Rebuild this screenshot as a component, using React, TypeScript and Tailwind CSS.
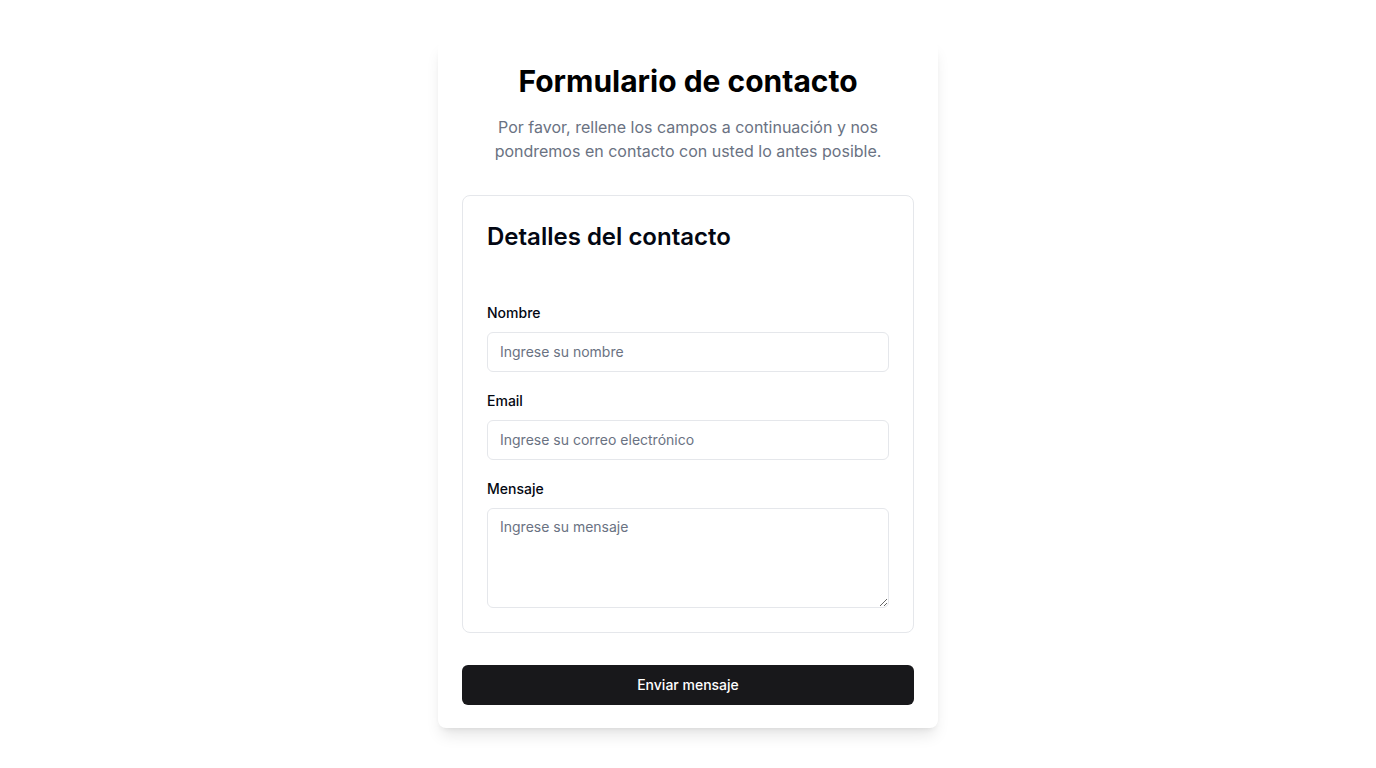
export default function App() {
  return (
    <div className="min-h-screen bg-white flex items-center justify-center font-['Inter',sans-serif]">
      <div className="w-[500px] bg-white rounded-lg shadow-lg px-6 pt-[22px] pb-[23px]">
        {/* Header */}
        <h1 className="text-3xl font-bold text-center text-black">Formulario de contacto</h1>
        <p className="mt-4 text-base text-gray-500 text-center leading-6 px-8">
          Por favor, rellene los campos a continuación y nos pondremos en contacto con usted lo antes posible.
        </p>

        {/* Details card */}
        <div className="mt-8 border border-gray-200 rounded-lg p-6">
          <h2 className="text-2xl font-semibold text-gray-950 leading-[34px]">Detalles del contacto</h2>

          <div className="mt-[49px]">
            <label className="block text-sm font-medium text-gray-950 leading-5">Nombre</label>
            <input
              type="text"
              placeholder="Ingrese su nombre"
              className="mt-[9px] w-full h-10 rounded-md border border-gray-200 px-3 text-sm placeholder:text-gray-500 outline-none"
            />
          </div>

          <div className="mt-[19px]">
            <label className="block text-sm font-medium text-gray-950 leading-5">Email</label>
            <input
              type="email"
              placeholder="Ingrese su correo electrónico"
              className="mt-[9px] w-full h-10 rounded-md border border-gray-200 px-3 text-sm placeholder:text-gray-500 outline-none"
            />
          </div>

          <div className="mt-[19px]">
            <label className="block text-sm font-medium text-gray-950 leading-5">Mensaje</label>
            <textarea
              placeholder="Ingrese su mensaje"
              className="mt-[9px] block w-full h-[100px] rounded-md border border-gray-200 px-3 py-2 text-sm placeholder:text-gray-500 outline-none"
            />
          </div>
        </div>

        <button className="mt-8 w-full h-10 rounded-md bg-zinc-900 text-white text-sm font-medium">
          Enviar mensaje
        </button>
      </div>
    </div>
  )
}
